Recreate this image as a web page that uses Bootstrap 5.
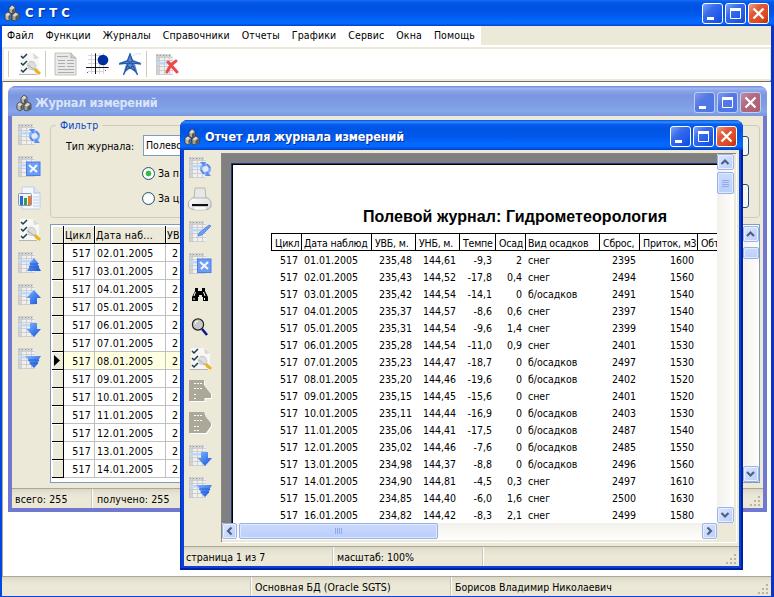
<!DOCTYPE html>
<html lang="ru">
<head>
<meta charset="utf-8">
<title>СГТС</title>
<link href="https://cdn.jsdelivr.net/npm/bootstrap@5.3.0/dist/css/bootstrap.min.css" rel="stylesheet">
<style>
:root{--face:#ece9d8}
html,body{height:597px;overflow:hidden}
body{font:10.5px/16px "DejaVu Sans Condensed","DejaVu Sans","Liberation Sans",sans-serif;font-stretch:condensed;color:#000;background:#fff;white-space:nowrap}
svg{display:block;flex:none}
.app{width:774px;height:597px;background:var(--face);border:solid #0046e0;border-width:0 3px 1px 2px;border-right-color:#0a34c4}
.cap{height:30px;background:linear-gradient(#0a50d8 0,#2c90ff 7%,#0a5cf0 14%,#0054e3 30%,#0058ea 55%,#0468ff 78%,#0468ff 88%,#0040c8 100%);color:#fff;font-weight:700;font-size:12.5px;text-shadow:1px 1px 0 #0a2a8c;padding:3px 4px 0}
.app>.cap{height:26px;margin:0 -3px 0 -2px;padding:0 5px 0 4px;background:linear-gradient(#1c6cf0 0,#0058ec 10%,#0052e0 30%,#0058ea 55%,#0468ff 80%,#0468ff 90%,#0040c8 100%)}
.cap-main{font-size:13px;padding-left:1px}
.cap-back{letter-spacing:-.3px;margin-left:3px}
.cap-front{letter-spacing:-.13px;margin-left:5px}
.btns{gap:2px}
.win .btns{margin-right:2px}
.wbtn{width:21px;height:21px;border:1px solid #fff;border-radius:3px;background:linear-gradient(135deg,#7fa4f6,#3a6cec 35%,#1f5bec 70%,#1a48d0)}
.wbtn.cls{background:linear-gradient(135deg,#f0a080,#e0583a 35%,#e04a20 70%,#b83010)}
.menu{height:19px;width:479px;background:#fff;padding-left:5px;gap:12px;padding-top:1px;letter-spacing:.12px}
.tools{height:36px;border-top:2px solid #fff;border-bottom:1px solid #aca899}
.tools-in{height:34px;background:#fff;border:solid var(--face);border-width:2px 0 2px 2px;margin-right:1px}
.vsep{width:1px;height:26px;background:#d0ccba}
.mdi{background:#fff;border-left:1px solid #aca899;border-top:1px solid #716f64}
.sbar{height:20px;border-top:1px solid #aca899;background:linear-gradient(#d9d6c6 0,#e6e3d3 4px,#ece9d8 10px,#ebe7d4)}
.sbar>div{padding:2px 0 0 3px;border-left:1px solid #fff;box-shadow:-1px 0 0 #cbc7b8}
.sbar>div:first-child{border-left:0;box-shadow:none}
.sbar .wide{letter-spacing:.09px}
.back .sbar{letter-spacing:.1px}
.win{border-radius:8px 8px 0 0;overflow:hidden}
.back{left:8px;top:86px;width:759px;height:426px;background:#7078d0;padding:0 4px 4px}
.back>.cap{margin:0 -4px;background:linear-gradient(#7088d8 0,#a0b8f0 8%,#8aa4e8 16%,#7b96e0 32%,#7e9ce4 60%,#84a6ea 85%,#7c94dc 100%);color:#d8e4f8;text-shadow:none}
.back .wbtn{background:linear-gradient(135deg,#7f9cec,#5478e4 40%,#4a76ea);border-color:#c0cef4}
.back .wbtn.cls{background:linear-gradient(135deg,#c090a4,#b46a80 40%,#b05c68)}
.front{left:180px;top:120px;width:563px;height:450px;background:#0842d8;padding:0 4px 4px;box-shadow:inset -2px -2px 0 #0020a0,inset 1px 0 0 #0030b8}
.front>.cap{margin:0 -4px}
.body-face{background:var(--face)}
.tcol{padding-left:5px;padding-top:6px;gap:8px;width:38px}
.tcol svg{width:24px;height:24px}
.front .tcol{padding-left:4px;padding-top:5px;width:37px}
.grp{border:1px solid #d0ccba;border-radius:4px;height:93px;width:710px;margin-top:9px;padding:9px 0 0 15px}
.grp-cap{left:5px;top:-9px;padding:0 4px;background:var(--face);color:#0046d5;letter-spacing:.15px}
.combo{width:540px;height:21px;border:1px solid #7f9db9;background:#fff;padding:1px 2px;overflow:hidden}
.rline{padding:9px 0 0 76px;gap:3px}
.rad{width:13px;height:13px;border-radius:50%;border:1px solid #21567c;background:radial-gradient(#fff 40%,#e4e2da)}
.rad.on{background:radial-gradient(circle,#3cba3c 0 2.5px,#fff 3.2px,#eee)}
.sidebtn{right:14px;width:40px;height:20px;border:1px solid #1d4f7c;border-radius:3px;background:#f6f5ef}
.gridbox{border:1px solid #7f9db9;background:#fff;width:710px;height:259px;margin-top:6px;padding:1px;letter-spacing:.25px}
.grow{height:18px}
.grow>div{border-right:1px solid #c0c0c0;border-bottom:1px solid #c0c0c0;padding-top:1px;overflow:hidden}
.grow .ind{width:12px;background:var(--face);border-right:1px solid #000;border-bottom:1px solid #000;box-shadow:inset 1px 1px 0 #fff;padding:0}
.c1{width:31px;text-align:right;padding-right:3px}.c2{width:71px;padding-left:2px}.c3{width:60px;padding-left:6px}
.ghead>div{background:var(--face);border-right:1px solid #000;border-bottom:1px solid #000;box-shadow:inset 1px 1px 0 #fff;padding-left:1px;padding-right:0;text-align:left}
.ghead .c3{padding-left:1px}
.cur>div:not(.ind){background:#ffffe1}
.view{border:solid #8a877a;border-width:1px 0 0 1px;margin:3px 3px 4px 0;box-shadow:1px 1px 0 #fff}
.gray{background:#808080;padding:9px 0 0 9px;width:495px;height:369px;overflow:hidden}
.paper{border:solid #1c3880;border-width:1px 0 0 1px;box-shadow:inset 1px 1px 0 #000;background:#fff;height:360px;padding:42px 0 0 39px}
.rtitle{font:bold 16px/22px "Liberation Sans",Arial,sans-serif;padding-left:92px;height:27px;letter-spacing:.08px}
.rrow{height:17px}
.rrow>div{flex:none;overflow:hidden;text-align:right;padding:1px 4px 0 0}
.rhead{height:18px}
.rhead>div{border:solid #000;border-width:1px 1px 1px 0;text-align:left;padding:1px 0 0 3px;letter-spacing:-.2px}
.rhead>div:first-child{border-left-width:1px}
.rrow .l{text-align:left;padding-left:2px;padding-right:0}
.sb{background:linear-gradient(90deg,#f3f1ec,#fefefb)}
.sbv{width:17px}
.sbh{background:linear-gradient(#f3f1ec,#fefefb);height:17px;width:495px}
.sbtn{width:15px;height:16px;border:1px solid #9cb4ec;border-radius:2px;background:linear-gradient(135deg,#dce6fe,#b9ccf9);box-shadow:inset 0 0 0 1px #e8f0ff;flex:none}
.thumb{border:1px solid #98b0e8;border-radius:2px;background:linear-gradient(#cbdafd,#bacefb);box-shadow:inset 0 0 0 1px #e0eaff;flex:none}
.th-v{height:22px;margin-top:2px}
.th-h{width:199px;height:16px;margin-left:2px}
.th-b{height:12px;margin-top:5px}
.backsb{right:8px;top:140px;width:16px;height:256px}
.grip{right:2px;bottom:1px}
</style>
<script src="https://cdn.jsdelivr.net/npm/bootstrap@5.3.0/dist/js/bootstrap.bundle.min.js"></script>
</head>
<body>
<svg width="0" height="0" class="position-absolute">
<defs>
<linearGradient id="bl" x1="0" y1="0" x2="1" y2="1"><stop offset="0" stop-color="#7db8ff"/><stop offset="1" stop-color="#1450e0"/></linearGradient>
<linearGradient id="pg" x1="0" y1="0" x2="1" y2="1"><stop offset="0" stop-color="#fff"/><stop offset="1" stop-color="#d4d4d4"/></linearGradient>
<symbol id="logo" viewBox="0 0 16 18">
<g stroke="#3a3a38" stroke-width=".8"><path d="M5 4l3-3 3 2v5l-3 2-3-2z" fill="#b0b0a8"/><path d="M1 10l3-2 3 2v5l-3 2-3-2z" fill="#bcbcb4"/><path d="M8 11l4-3 3 2v5l-4 2-3-1z" fill="#a0a098"/></g>
<path d="M5.500 4.500l2.500-3 2 2-2 2zM1.500 10.500l2.500-2 2 2-2 2zM8.500 11.500l3-3 2 2-2.500 2z" fill="#d8d8d0"/><path d="M8 6v3.500l2.500-1.500V4.500zM4.500 12v4l2-1.500v-4zM11.500 13v3.500l3-2v-4z" fill="#55554f"/></symbol>
<symbol id="g" viewBox="0 0 24 24"><path d="M1 2h15l2 2v19H1z" fill="#f0f0f0"/><path d="M1 2h3v21H1zM1 2h15v3H1z" fill="#d4d4d4"/><path d="M1.500 2v21M4.500 2v21M9.500 2v21M14.500 2v21M1 5.500h17M1 8.500h17M1 14.500h17M1 18.500h17M1 22.500h17" stroke="#c6c6c6" fill="none" stroke-width=".8"/><path d="M2 3.500h13" stroke="#999" stroke-dasharray="1 2"/><path d="M1 10h17v2.500H1z" fill="#bcd8f8"/></symbol>
<symbol id="ref" viewBox="0 0 24 24"><use href="#g"/><circle cx="17.500" cy="14" r="4.300" fill="#dfe9fb" stroke="#86aef4" stroke-width="2.600"/><path d="M12 7l6 0-2 5zM23 21l-6 0 2-5z" fill="#5c90f0"/><path d="M19 9l3 4M13 15l3 4" stroke="#4a7ee4" stroke-width="1.200" fill="none"/></symbol>
<symbol id="xl" viewBox="0 0 24 24"><use href="#g"/><rect x="9.500" y="8" width="13.500" height="13.500" fill="#6c9cf4" stroke="#4a7ee8"/><path d="M12 11l8 7M20 11l-7 7" stroke="#f0f6ff" stroke-width="2.200"/></symbol>
<symbol id="chart" viewBox="0 0 24 24"><path d="M5 1h12l6 6v16H5z" fill="#f4f7fc" stroke="#b8c8e4" stroke-width=".8"/><path d="M17 1v6h6" fill="#dfe7f4" stroke="#a8b8d4" stroke-width=".8"/><path d="M16 11h6M16 14h6M16 17h6M16 20h6" stroke="#bcd0f0"/><rect x="1.500" y="7.500" width="13" height="12" rx="1" fill="#eef4fc" stroke="#8898b0"/><path d="M3 10h3v9H3z" fill="#2868d8"/><path d="M7 12h3v7H7z" fill="#38a048"/><path d="M11 10h3v9h-3z" fill="#f07820"/></symbol>
<symbol id="chk" viewBox="0 0 24 24"><path d="M3 1h14l5 5v17H3z" fill="#f7f7f5"/><path d="M16 1l1 6 5-1z" fill="#d8d8d4"/><path d="M2 22.500h18" stroke="#b4b4b0"/><path d="M4 4l2 2 4-4M4 11l2 2 4-4M4 18l2 2 4-4" fill="none" stroke="#1c3c48" stroke-width="1.500"/><path d="M10 13l3-4 4 1 2 4-2 4-5-1z" fill="#dedede" stroke="#bbb" stroke-width=".7"/><path d="M11 13l8 6" stroke="#aaa" stroke-width="1"/><path d="M17 17l2-1 5 5-2 2-4-3z" fill="#e8b420"/></symbol>
<symbol id="gdown" viewBox="0 0 24 24"><use href="#g"/><path d="M13 9h7v6h4l-7 8-7.500-8H13z" fill="url(#bl)"/></symbol>
<symbol id="gup" viewBox="0 0 24 24"><use href="#g"/><path d="M13 22h7v-6h4l-7-8-7.500 8H13z" fill="url(#bl)"/></symbol>
<symbol id="gtop" viewBox="0 0 24 24"><use href="#g"/><path d="M17 8l5 6h-1.500l2 3h-1l2.500 4H10l2.500-4h-1l2-3H12z" fill="url(#bl)"/><path d="M13 14h8M12 17h10" stroke="#2458c8" stroke-width=".8"/></symbol>
<symbol id="gbot" viewBox="0 0 24 24"><use href="#g"/><path d="M8 10h16l-2.500 4h1l-2 3h1L17 22l-5-5h1l-2-3h1z" fill="url(#bl)"/><path d="M11 14h11M13 17h8" stroke="#2458c8" stroke-width=".8"/></symbol>
<symbol id="edit" viewBox="0 0 24 24"><use href="#g"/><path d="M11 14l10-8 2 1-9 9-4 1z" fill="#6e9cf0" stroke="#4c7cdc" stroke-width=".8"/></symbol>
<symbol id="print" viewBox="0 0 24 24"><path d="M7 1h10l1 11H6z" fill="#e8e8e6" stroke="#aaa" stroke-width=".8"/><path d="M4 11h16l3 4v5l-3 2.500H4L.5 20v-5z" fill="url(#pg)" stroke="#999" stroke-width=".7"/><path d="M4 17h16v2H4z" fill="#111"/><path d="M5 19.500h14l-1 3.500H6z" fill="#fafafa" stroke="#aaa" stroke-width=".5"/></symbol>
<symbol id="bino" viewBox="0 0 24 24"><path d="M7 5h3v3h4V5h3v3l3 6v4h-5v-4h-1v-2h-3v2h-1v4H4v-4l3-6z" fill="#000"/><path d="M7.500 9L6 13M15.500 9l1.500 4M6 15v2M16.500 15v2" stroke="#fff" stroke-width="1"/></symbol>
<symbol id="mag" viewBox="0 0 24 24"><circle cx="10" cy="9.500" r="5.600" fill="#c8c8c8" stroke="#222" stroke-width="1.200"/><path d="M7 9q0-3 3-3" stroke="#fff" fill="none"/><path d="M14 14l5 6" stroke="#101890" stroke-width="2.600"/></symbol>
<symbol id="dis" viewBox="0 0 24 24"><path d="M2 2h15v4.500l7 9v4.500h-6.500v3H2z" fill="#fff"/><path d="M1 1h15v5l7 9v4h-6.500v3H1z" fill="#aca899"/><path d="M6 4.500h9M6 9.500h9M6 15.500h3M6 19.500h3" stroke="#fff" stroke-dasharray="2 1"/></symbol>
<symbol id="dis2" viewBox="0 0 24 24"><path d="M2 2h15l2 5 5 5.500V15l-4.500 8H2z" fill="#fff"/><path d="M1 1h15l2 5 5 6v3l-5 7H1z" fill="#aca899"/><path d="M6 4.500h9M6 9.500h9M6 15.500h5M6 19.500h5" stroke="#fff" stroke-dasharray="2 1"/></symbol>
<symbol id="news" viewBox="0 0 24 24"><path d="M1 1h16l5 5v17H1z" fill="#e9e9e9" stroke="#b4b4b4" stroke-width=".8"/><path d="M17 1v5h5" fill="#cfcfcf" stroke="#a4a4a4" stroke-width=".7"/><path d="M3 4.500h11M4 8.500h7M13 8.500h7M4 11.500h7M13 11.500h7M4 14.500h7M13 14.500h7M4 17.500h16M4 20.500h16" stroke="#adadad"/></symbol>
<symbol id="plot" viewBox="0 0 24 24"><path d="M2 3.500h16M2 7.500h16M2 11.500h16M2 19.500h16M5.500 1v21M13.500 1v21M17.500 1v21" stroke="#d4d4d4" stroke-width=".9"/><path d="M0 15.500h23M9.500 1v21" stroke="#151515"/><circle cx="17" cy="8" r="5.300" fill="#0030a0"/><path d="M9 1h1v1H9zM1 20h1v1H1zM19 18h1v1h-1zM22 15h1v1h-1z" fill="#d010b0"/></symbol>
<symbol id="tower" viewBox="0 0 24 24"><path d="M12 1l3 7 8 3v2l-6-1 3 11-8-8-7 8 3-11-7 1v-2l8-3z" fill="#5c88cc"/><path d="M12 2l2.500 7 8 2.500H1.500L9.500 9zM10 12L5.500 23M14 12l5.500 11M9 14l8 5M15 14l-8 5M9.500 9l5 3M14.500 9l-5 3" fill="none" stroke="#2858a8" stroke-width="1.200"/><path d="M15 4q3-3 8-2" stroke="#c4d0d4" stroke-dasharray="2 1" fill="none"/></symbol>
<symbol id="gdel" viewBox="0 0 24 24"><use href="#g"/><path d="M13 10l9 10M21 9q-6 4-9 11" stroke="#f04848" stroke-width="3" stroke-linecap="round" fill="none"/></symbol>
<symbol id="min" viewBox="0 0 19 19"><path d="M4 13h7v3H4z" fill="#fff"/></symbol>
<symbol id="max" viewBox="0 0 19 19"><path d="M4.500 5h10v9.500h-10z" fill="none" stroke="#fff" stroke-width="1"/><path d="M4 4h11v3H4z" fill="#fff"/></symbol>
<symbol id="x" viewBox="0 0 19 19"><path d="M4.500 4.500l10 10M14.500 4.500l-10 10" stroke="#fff" stroke-width="2.300"/></symbol>
<symbol id="cv" viewBox="0 0 13 14"><path d="M3 9l3.500-3.500L10 9" fill="none" stroke="#4d6185" stroke-width="2.200"/></symbol>
<symbol id="grip" viewBox="0 0 12 12"><path d="M9 1h2v2H9zM5 5h2v2H5zM9 5h2v2H9zM1 9h2v2H1zM5 9h2v2H5zM9 9h2v2H9z" fill="#b8b4a2"/></symbol>
</defs></svg>

<div class="app d-flex flex-column">
  <div class="cap d-flex align-items-center">
    <svg width="16" height="18"><use href="#logo"/></svg><span class="ms-1 cap-main">С Г Т С</span>
    <div class="ms-auto d-flex btns"><div class="wbtn"><svg width="19" height="19"><use href="#min"/></svg></div><div class="wbtn"><svg width="19" height="19"><use href="#max"/></svg></div><div class="wbtn cls"><svg width="19" height="19"><use href="#x"/></svg></div></div>
  </div>
  <div class="menu d-flex"><span>Файл</span><span>Функции</span><span>Журналы</span><span>Справочники</span><span>Отчеты</span><span>Графики</span><span>Сервис</span><span>Окна</span><span>Помощь</span></div>
  <div class="tools"><div class="tools-in d-flex align-items-center">
    <div class="vsep ms-1"></div><svg class="ms-2" width="24" height="24"><use href="#chk"/></svg>
    <div class="vsep ms-1 me-1"></div><svg class="ms-1" width="24" height="24"><use href="#news"/></svg><svg class="ms-2" width="24" height="24"><use href="#plot"/></svg><svg class="ms-2" width="24" height="24"><use href="#tower"/></svg>
    <div class="vsep ms-1 me-1"></div><svg class="ms-1" width="24" height="24"><use href="#gdel"/></svg>
  </div></div>
  <div class="mdi flex-grow-1"></div>
  <div class="sbar d-flex position-relative"><div style="width:249px"></div><div style="width:200px"><span class="wide">Основная БД (Oracle SGTS)</span></div><div><span>Борисов Владимир Николаевич</span></div><svg class="position-absolute grip" width="12" height="12"><use href="#grip"/></svg></div>
</div>

<section class="win back position-absolute d-flex flex-column">
  <div class="cap d-flex align-items-center"><svg class="ms-1" width="16" height="18"><use href="#logo"/></svg><span class="cap-back">Журнал измерений</span>
    <div class="ms-auto d-flex btns"><div class="wbtn"><svg width="19" height="19"><use href="#min"/></svg></div><div class="wbtn"><svg width="19" height="19"><use href="#max"/></svg></div><div class="wbtn cls"><svg width="19" height="19"><use href="#x"/></svg></div></div></div>
  <div class="body-face flex-grow-1 d-flex flex-column position-relative">
    <div class="d-flex flex-grow-1">
      <div class="tcol d-flex flex-column">
        <svg><use href="#ref"/></svg><svg><use href="#xl"/></svg><svg><use href="#chart"/></svg><svg><use href="#chk"/></svg><svg><use href="#gtop"/></svg><svg><use href="#gup"/></svg><svg><use href="#gdown"/></svg><svg><use href="#gbot"/></svg>
      </div>
      <div>
        <div class="grp position-relative"><span class="grp-cap position-absolute">Фильтр</span>
          <div class="d-flex align-items-center"><span style="width:77px">Тип журнала:</span><div class="combo">Полевой</div></div>
          <div class="d-flex align-items-center rline"><span class="rad on"></span><span>За п</span></div>
          <div class="d-flex align-items-center rline"><span class="rad"></span><span>За ц</span></div>
        </div>
        <div class="gridbox"><div id="grid"></div></div>
      </div>
    </div>
    <div class="sbar d-flex position-relative"><div style="width:80px">всего: 255</div><div>&#8202;получено: 255</div><svg class="position-absolute grip" width="12" height="12"><use href="#grip"/></svg></div>
    <div class="position-absolute sidebtn" style="top:20px"></div><div class="position-absolute sidebtn" style="top:68px;height:24px"></div>
  </div>
  <div class="position-absolute sb backsb d-flex flex-column"><div class="sbtn w-100"><svg width="13" height="14"><use href="#cv"/></svg></div><div class="thumb th-b"></div><div class="sbtn w-100 mt-auto"><svg width="13" height="14" transform="rotate(180)"><use href="#cv"/></svg></div></div>
</section>

<section class="win front position-absolute d-flex flex-column">
  <div class="cap d-flex align-items-center"><svg width="16" height="18"><use href="#logo"/></svg><span class="cap-front">Отчет для журнала измерений</span>
    <div class="ms-auto d-flex btns"><div class="wbtn"><svg width="19" height="19"><use href="#min"/></svg></div><div class="wbtn"><svg width="19" height="19"><use href="#max"/></svg></div><div class="wbtn cls"><svg width="19" height="19"><use href="#x"/></svg></div></div></div>
  <div class="body-face flex-grow-1 d-flex flex-column">
    <div class="d-flex flex-grow-1">
      <div class="tcol d-flex flex-column">
        <svg><use href="#ref"/></svg><svg><use href="#print"/></svg><svg><use href="#edit"/></svg><svg><use href="#xl"/></svg><svg><use href="#bino"/></svg><svg><use href="#mag"/></svg><svg><use href="#chk"/></svg><svg><use href="#dis"/></svg><svg><use href="#dis2"/></svg><svg><use href="#gdown"/></svg><svg><use href="#gbot"/></svg>
      </div>
      <div class="view flex-grow-1">
        <div class="d-flex"><div class="gray"><div class="paper"><div class="rtitle">Полевой журнал: Гидрометеорология</div><div id="report"></div></div></div>
          <div class="sb sbv d-flex flex-column"><div class="sbtn w-100"><svg width="14" height="14"><use href="#cv"/></svg></div><div class="thumb th-v w-100"><svg width="15" height="20"><path d="M4 7.500h7M4 9.500h7M4 11.500h7M4 13.500h7" stroke="#8fa9ee"/></svg></div><div class="sbtn w-100 mt-auto"><svg width="14" height="14" transform="rotate(180)"><use href="#cv"/></svg></div></div></div>
        <div class="sbh d-flex"><div class="sbtn"><svg width="13" height="14" transform="rotate(-90)"><use href="#cv"/></svg></div><div class="thumb th-h"><svg width="197" height="14"><path d="M95.500 4v6M97.500 4v6M99.500 4v6M101.500 4v6" stroke="#8fa9ee"/></svg></div><div class="sbtn ms-auto"><svg width="13" height="14" transform="rotate(90)"><use href="#cv"/></svg></div></div>
      </div>
    </div>
    <div class="sbar d-flex position-relative"><div style="width:149px;padding-left:2px">страница 1 из 7</div><div style="width:150px">масштаб: 100%</div><div></div><svg class="position-absolute grip" width="12" height="12"><use href="#grip"/></svg></div>
  </div>
</section>

<script>
const two = n => String(n).padStart(2, '0');
let g = '<div class="grow ghead d-flex"><div class="ind"></div><div class="c1">Цикл</div><div class="c2">Дата наб...</div><div class="c3">УВ</div></div>';
for (let d = 2; d <= 14; d++)
  g += `<div class="grow d-flex${d === 8 ? ' cur' : ''}"><div class="ind">${d === 8 ? '<svg width="11" height="17"><path d="M2 3l6 5.500L2 14z"/></svg>' : ''}</div><div class="c1">517</div><div class="c2">${two(d)}.01.2005</div><div class="c3">2</div></div>`;
document.getElementById('grid').innerHTML = g;

const w = [31, 70, 44, 44, 36, 30, 74, 40, 58, 20];
const head = ['Цикл', 'Дата наблюд', 'УВБ, м.', 'УНБ, м.', 'Темпе', 'Осад', 'Вид осадков', 'Сброс,', 'Приток, м3', 'Обт'];
const S = 'снег', B = 'б/осадков';
const rows = [
 ['235,48','144,61','-9,3','2',S,2395,1600],['235,43','144,52','-17,8','0,4',S,2494,1560],
 ['235,42','144,54','-14,1','0',B,2491,1540],['235,37','144,57','-8,6','0,6',S,2397,1540],
 ['235,31','144,54','-9,6','1,4',S,2399,1540],['235,28','144,54','-11,0','0,9',S,2401,1530],
 ['235,23','144,47','-18,7','0',B,2497,1530],['235,20','144,46','-19,6','0',B,2402,1520],
 ['235,15','144,45','-15,6','0',S,2401,1520],['235,11','144,44','-16,9','0',B,2403,1530],
 ['235,06','144,41','-17,5','0',B,2487,1540],['235,02','144,46','-7,6','0',B,2485,1550],
 ['234,98','144,37','-8,8','0',B,2496,1560],['234,90','144,81','-4,5','0,3',S,2497,1610],
 ['234,85','144,40','-6,0','1,6',S,2500,1630],['234,82','144,42','-8,3','2,1',S,2499,1580]];
const line = (cells, cls) => `<div class="rrow d-flex ${cls}">` + cells.map((c, i) =>
  `<div class="${i === 1 || i === 6 ? 'l' : ''}" style="width:${w[i]}px">${c}</div>`).join('') + '</div>';
document.getElementById('report').innerHTML = line(head, 'rhead') +
  rows.map((r, i) => line(['517', two(i + 1) + '.01.2005', ...r], '')).join('');
</script>
</body>
</html>
